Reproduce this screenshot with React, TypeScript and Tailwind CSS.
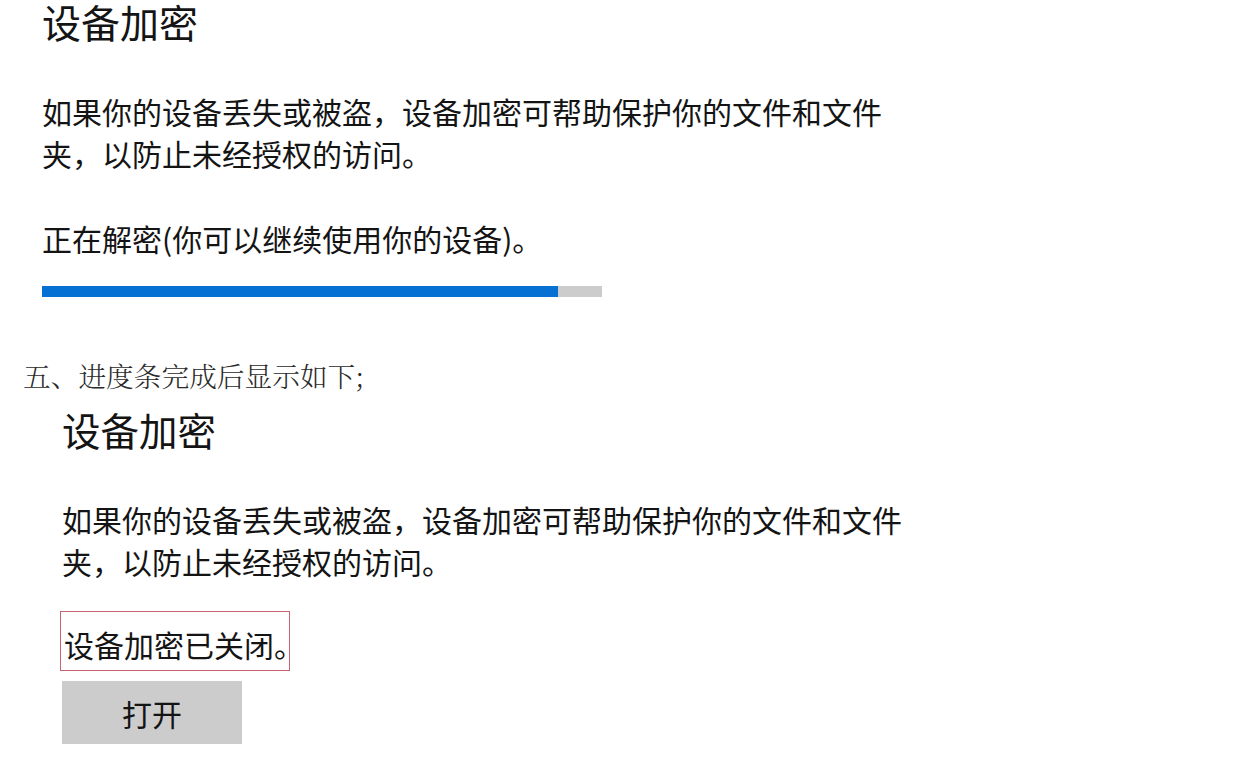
import React from "react";

const ui = { fontFamily: '"Noto Sans CJK SC", "Noto Sans", sans-serif' };
const serif = { fontFamily: '"Noto Serif CJK SC", "Liberation Serif", "Noto Sans CJK SC", serif' };

export default function App() {
  return (
    <div className="w-[1242px] h-[783px] overflow-hidden bg-white text-[#141414]" style={ui}>
      <div className="flex flex-col pl-[42px]">
        <h1 className="text-[39px] leading-[42px] font-normal">设备加密</h1>
        <p className="mt-[48px] text-[30px] leading-[42px]">
          如果你的设备丢失或被盗，设备加密可帮助保护你的文件和文件
          <br />
          夹，以防止未经授权的访问。
        </p>
        <p className="mt-[43px] text-[30px] leading-[42px]">正在解密(你可以继续使用你的设备)。</p>
        <div className="mt-[27px] w-[560px] h-[11px] bg-[#cccccc] flex">
          <div className="w-[516px] h-full bg-[#0670d3]" />
        </div>
      </div>
      <p className="mt-[60px] pl-[23px] text-[27.7px] leading-[37px] font-light text-[#2a2a2a]" style={serif}>
        五、进度条完成后显示如下;
      </p>
      <div className="flex flex-col pl-[62px]">
        <h1 className="mt-[13px] text-[38.5px] leading-[44px] font-normal">设备加密</h1>
        <p className="mt-[47px] text-[30px] leading-[42px]">
          如果你的设备丢失或被盗，设备加密可帮助保护你的文件和文件
          <br />
          夹，以防止未经授权的访问。
        </p>
        <div className="mt-[29px] -ml-[2px] w-[230px] h-[60px] border border-[#c9636f] pl-[3px] pt-[11px]">
          <p className="text-[30px] leading-[42px] whitespace-nowrap">设备加密已关闭。</p>
        </div>
        <button className="mt-[10px] w-[180px] h-[63px] bg-[#cccccc] flex items-center justify-center text-[30px] leading-none text-[#141414]">
          打开
        </button>
      </div>
    </div>
  );
}
